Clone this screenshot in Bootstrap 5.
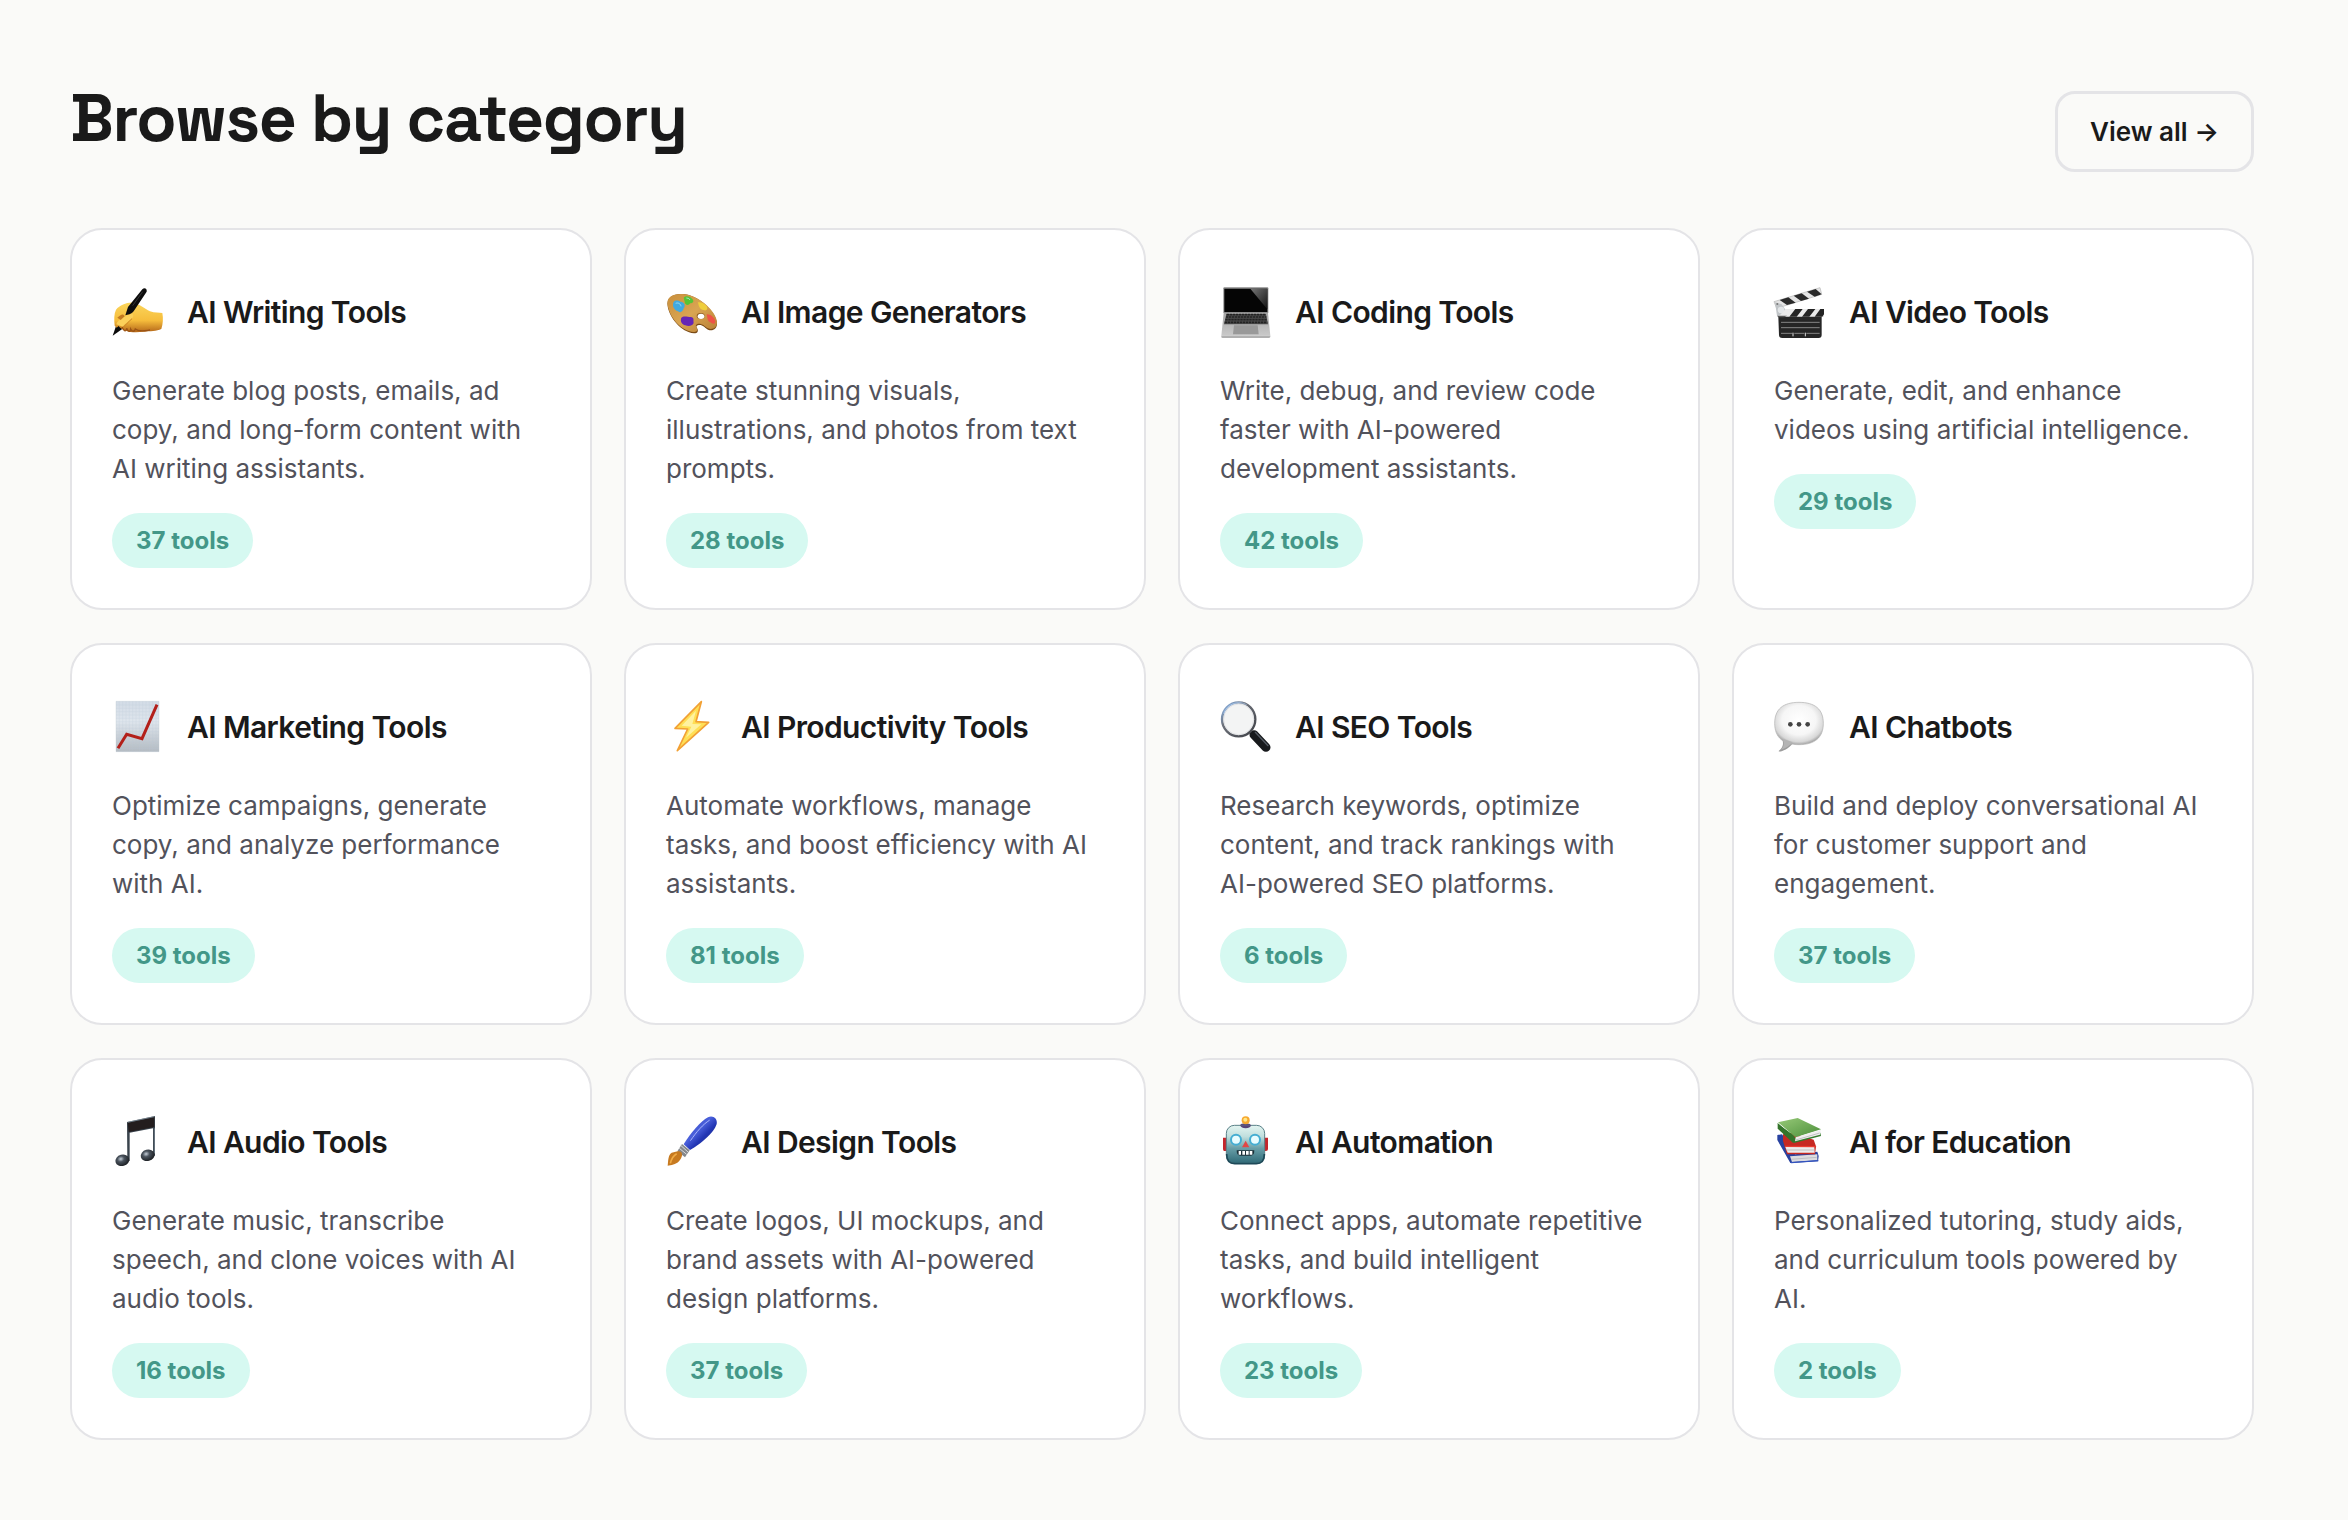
<!DOCTYPE html>
<html lang="en">
<head>
<meta charset="utf-8">
<meta name="viewport" content="width=device-width, initial-scale=1">
<title>Browse by category</title>
<link rel="stylesheet" href="https://cdn.jsdelivr.net/npm/bootstrap@5.3.0/dist/css/bootstrap.min.css">
<style>
  body { background: #fafaf8; color: #1a1a1a; font-family: Inter, "Liberation Sans", sans-serif; font-optical-sizing: none; }
  .browse { padding: 80px 94px 80px 70px; }
  .browse-head { margin-bottom: 56px; }
  .browse-title { font-family: "Space Grotesk", Inter, sans-serif; font-size: 66px; line-height: 76px; font-weight: 700; letter-spacing: -0.02em; margin-bottom: 16px; }
  .view-all { --bs-btn-color: #1a1a1a; --bs-btn-border-color: #e4e4e7; --bs-btn-hover-border-color: #c8c8cd; --bs-btn-font-size: 26px; --bs-btn-font-weight: 600; --bs-btn-line-height: 39px; --bs-btn-padding-x: 32px; --bs-btn-padding-y: 18px; --bs-btn-border-width: 3px; --bs-btn-border-radius: 20px; }
  .category-grid { --bs-gutter-x: 32px; --bs-gutter-y: 33px; }
  .category { --bs-card-border-color: #e4e4e7; --bs-card-border-width: 2px; --bs-card-border-radius: 32px; --bs-card-inner-border-radius: 30px; --bs-card-spacer-x: 40px; --bs-card-spacer-y: 40px; --bs-card-bg: #fff; color: #1a1a1a; }
  .category-head { height: 84px; gap: 24px; margin-bottom: 17px; }
  .category-head svg { width: 51px; height: 51px; flex: none; overflow: visible; }
  .category-name { font-size: 30px; line-height: 40px; font-weight: 600; letter-spacing: -0.02em; margin: 0; }
  .category-text { font-size: 26px; line-height: 39px; color: #52525b; margin-bottom: 25px; padding-right: 6px; }
  .tool-count { display: inline-block; background: #d6f9f1; color: #439788; font-size: 24px; line-height: 35px; font-weight: 700; padding: 10px 24px; vertical-align: top; }
</style>
<script src="https://cdn.jsdelivr.net/npm/bootstrap@5.3.0/dist/js/bootstrap.bundle.min.js" defer></script>
</head>
<body>
<svg width="0" height="0" class="position-absolute" aria-hidden="true">
  <defs>
    <linearGradient id="skin" x1="0" y1="0" x2="0" y2="1"><stop offset="0" stop-color="#fbd65c"/><stop offset=".6" stop-color="#f6bd3c"/><stop offset="1" stop-color="#b5681a"/></linearGradient>
    <linearGradient id="wood" x1="0" y1="0" x2="1" y2="1"><stop offset="0" stop-color="#c98f3c"/><stop offset=".5" stop-color="#d9a552"/><stop offset="1" stop-color="#b87f35"/></linearGradient>
    <linearGradient id="paper" x1="0" y1="0" x2="0" y2="1"><stop offset="0" stop-color="#d3dce6"/><stop offset=".4" stop-color="#dfe6ed"/><stop offset="1" stop-color="#b4bbc2"/></linearGradient>
    <linearGradient id="glare" x1="0" y1="0" x2="1" y2="1"><stop offset="0" stop-color="#777"/><stop offset="1" stop-color="#111"/></linearGradient>
    <linearGradient id="metal" x1="0" y1="0" x2="0" y2="1"><stop offset="0" stop-color="#a6a6a6"/><stop offset="1" stop-color="#c9c9c9"/></linearGradient>
    <radialGradient id="bubble" cx=".5" cy=".42" r=".58"><stop offset="0" stop-color="#fff"/><stop offset=".6" stop-color="#f6f6f6"/><stop offset=".88" stop-color="#d8d8d8"/><stop offset="1" stop-color="#a5a5a5"/></radialGradient>
    <linearGradient id="lens" x1="0" y1="0" x2="1" y2="1"><stop offset="0" stop-color="#8fbdf5"/><stop offset=".35" stop-color="#6d717a"/><stop offset="1" stop-color="#3d3f44"/></linearGradient>
    <linearGradient id="robo" x1="0" y1="0" x2="0" y2="1"><stop offset="0" stop-color="#e4f5f1"/><stop offset=".3" stop-color="#bfdedd"/><stop offset=".6" stop-color="#699fa8"/><stop offset="1" stop-color="#2f6a77"/></linearGradient>
    <radialGradient id="ball" cx=".42" cy=".35" r=".7"><stop offset="0" stop-color="#c5ced8"/><stop offset=".35" stop-color="#4a535d"/><stop offset="1" stop-color="#15181b"/></radialGradient>
    <linearGradient id="green" x1="0" y1="0" x2="1" y2="1"><stop offset="0" stop-color="#97c978"/><stop offset="1" stop-color="#4b8f3a"/></linearGradient>
    <linearGradient id="blue" x1="0" y1="0" x2="1" y2="1"><stop offset="0" stop-color="#2537a8"/><stop offset=".42" stop-color="#4a60dc"/><stop offset=".6" stop-color="#2236b4"/><stop offset="1" stop-color="#18226e"/></linearGradient>
  </defs>
</svg>

<main class="browse">
  <header class="browse-head d-flex flex-wrap justify-content-between align-items-end">
    <h2 class="browse-title">Browse by category</h2>
    <a class="btn view-all" href="#all">View all →</a>
  </header>

  <div class="row row-cols-1 row-cols-md-2 row-cols-xl-4 category-grid">
    <div class="col"><article class="card category h-100"><div class="card-body">
      <div class="category-head d-flex align-items-center">
        <svg viewBox="36 48 153 153" aria-hidden="true">
          <path d="M50 160 38 194 72 170Z" fill="#0b0b0b"/>
          <path d="M44 164C42 146 42 128 48 116C60 102 82 93 100 95C118 98 134 113 150 121C164 126 178 125 187 126C190 142 189 158 184 174C170 181 150 180 132 182C114 184 92 185 78 179C68 176 60 172 56 165L50 170Z" fill="url(#skin)"/>
          <path d="M49 160C54 146 72 138 88 130C98 124 104 133 96 142C86 152 76 158 68 167Z" fill="#fbd05a"/>
          <path d="M52 140C62 130 70 126 74 136L62 147Z" fill="#c37a20"/>
          <path d="M96 143C84 154 78 160 70 169" fill="none" stroke="#cc8527" stroke-width="3"/>
          <path d="M66 168C72 182 78 183 80 172C84 184 91 184 92 174C97 184 104 182 106 174C118 184 140 178 150 177" fill="none" stroke="#9b5415" stroke-width="4"/>
          <path d="M127 55Q134 48 140 56V62L103 118Q96 130 82 131L76 133 84 108Z" fill="#0d0d0d"/>
          <path d="M128 62 98 104" stroke="#4a4a4a" stroke-width="2"/>
        </svg>
        <h3 class="category-name">AI Writing Tools</h3>
      </div>
      <p class="category-text">Generate blog posts, emails, ad copy, and long-form content with AI writing assistants.</p>
      <span class="tool-count rounded-pill">37 tools</span>
    </div></article></div>

    <div class="col"><article class="card category h-100"><div class="card-body">
      <div class="category-head d-flex align-items-center">
        <svg viewBox="33 48 153 153" aria-hidden="true">
          <path d="M38 106C33 78 58 66 90 70C138 77 184 126 186 157C187 175 171 182 159 176C149 171 148 165 137 162C127 161 122 165 126 171C131 180 129 187 117 187C78 184 43 140 38 106Z" fill="#7b4b16"/>
          <path d="M38 102C33 76 58 66 90 70C138 77 184 124 186 153C187 170 171 178 159 172C149 167 148 162 137 159C125 157 120 163 124 169C129 177 127 184 116 183C78 180 43 138 38 102Z" fill="url(#wood)"/>
          <ellipse cx="137" cy="135" rx="12" ry="9" fill="#8b5a20"/><ellipse cx="138" cy="136" rx="10" ry="8" fill="#fff"/>
          <path d="M55 95C57 86 70 88 77 92C89 94 92 103 86 112C84 122 76 127 69 121C58 116 51 106 55 95Z" fill="#41a9e0"/>
          <path d="M86 80C92 73 106 75 111 83C119 90 114 97 105 97C101 106 88 101 89 92Z" fill="#56c436"/>
          <path d="M129 94C137 93 149 97 155 106C160 115 153 121 146 117C135 117 131 106 129 94Z" fill="#efce3c"/>
          <path d="M155 130C165 129 178 138 181 150C181 161 173 160 166 154C157 151 158 142 155 130Z" fill="#ee5347"/>
          <path d="M79 140C85 133 99 138 107 138C119 139 114 148 116 156C111 167 99 166 91 163C80 160 75 151 79 140Z" fill="#6526b5"/>
          <path d="M62 97C69 94 77 98 78 106M94 81Q103 81 105 87" stroke="#b5ecfb" stroke-width="3" fill="none" opacity=".7"/>
        </svg>
        <h3 class="category-name">AI Image Generators</h3>
      </div>
      <p class="category-text">Create stunning visuals, illustrations, and photos from text prompts.</p>
      <span class="tool-count rounded-pill">28 tools</span>
    </div></article></div>

    <div class="col"><article class="card category h-100"><div class="card-body">
      <div class="category-head d-flex align-items-center">
        <svg viewBox="30 48 153 153" aria-hidden="true">
          <path d="M43 49H172Q175 49 175 52V126H40V52Q40 49 43 49Z" fill="#8b8b8b"/>
          <path d="M43 53H172V123H43Z" fill="#050505"/>
          <path d="M121 53H172V115Z" fill="url(#glare)"/>
          <path d="M41 126H174L181 194H34Z" fill="url(#metal)"/>
          <path d="M49 129H168L174 160H42Z" fill="#4c4c4c"/>
          <path d="M50 131H168M48 138H169M46 146H170M44 154H172" stroke="#222" stroke-width="5" stroke-dasharray="7 2"/>
          <path d="M72 163H143L146 190H69Z" fill="#999"/>
          <path d="M34 194H181V198Q180 201 176 201H38Q34 201 34 198Z" fill="#b0b0b0"/>
        </svg>
        <h3 class="category-name">AI Coding Tools</h3>
      </div>
      <p class="category-text">Write, debug, and review code faster with AI-powered development assistants.</p>
      <span class="tool-count rounded-pill">42 tools</span>
    </div></article></div>

    <div class="col"><article class="card category h-100"><div class="card-body">
      <div class="category-head d-flex align-items-center">
        <svg viewBox="27 48 153 153" aria-hidden="true">
          <path d="M27 92 165 50 170 70 35 112Z" fill="#e4e4e4" stroke="#b4b4b4" stroke-width="2"/>
          <path d="M44 87 70 79 92 95 66 102ZM86 74 110 67 132 83 108 90ZM126 62 152 54 170 70 149 77Z" fill="#2a2a2a"/>
          <path d="M30 94 50 100 70 128 66 134H36Z" fill="#c1c5c8"/><circle cx="48" cy="117" r="10" fill="#e3e6e8"/>
          <circle cx="37" cy="99" r="3" fill="#777"/><circle cx="58" cy="129" r="3" fill="#777"/>
          <path d="M62 114H177V137H40Z" fill="#e9e9e9"/>
          <path d="M91 114H113L95 137H73ZM129 114H151L133 137H111ZM166 114H177V130L172 137H149Z" fill="#242424"/>
          <path d="M40 137H170V192Q170 201 161 201H52Q42 201 42 192Z" fill="#262626"/>
          <path d="M48 154H164M48 170H164M48 187H82M88 187H118M124 187H164" stroke="#858585" stroke-width="3"/>
          <path d="M84 185V196M121 185V196" stroke="#ddd" stroke-width="3"/>
          <path d="M36 134H66L58 139H40Z" fill="#555"/>
        </svg>
        <h3 class="category-name">AI Video Tools</h3>
      </div>
      <p class="category-text">Generate, edit, and enhance videos using artificial intelligence.</p>
      <span class="tool-count rounded-pill">29 tools</span>
    </div></article></div>

    <div class="col"><article class="card category h-100"><div class="card-body">
      <div class="category-head d-flex align-items-center">
        <svg viewBox="36 48 153 153" aria-hidden="true">
          <path d="M48 46H177V197H48Z" fill="url(#paper)" stroke="#bcc8d2" stroke-width="1"/>
          <path d="M58 46V197M68 46V197M78 46V197M88 46V197M98 46V197M108 46V197M118 46V197M128 46V197M138 46V197M148 46V197M158 46V197M168 46V197M48 57H177M48 67H177M48 77H177M48 87H177M48 97H177M48 107H177M48 117H177M48 127H177M48 137H177M48 147H177M48 157H177M48 167H177M48 177H177M48 187H177" stroke="#b8c8d7" stroke-width="1" opacity=".6"/>
          <path d="M54 187 80 145 126 158 171 56" fill="none" stroke="#b3201a" stroke-width="9"/>
        </svg>
        <h3 class="category-name">AI Marketing Tools</h3>
      </div>
      <p class="category-text">Optimize campaigns, generate copy, and analyze performance with AI.</p>
      <span class="tool-count rounded-pill">39 tools</span>
    </div></article></div>

    <div class="col"><article class="card category h-100"><div class="card-body">
      <div class="category-head d-flex align-items-center">
        <svg viewBox="36 48 153 153" aria-hidden="true">
          <path d="M142 47 63 127 101 129 70 194 164 109 126 107Z" fill="#ffdf55" stroke="#f2a135" stroke-width="5" stroke-linejoin="round"/>
          <path d="M126 74 83 119 112 122 96 155 142 115 115 114Z" fill="#fff2a0"/>
        </svg>
        <h3 class="category-name">AI Productivity Tools</h3>
      </div>
      <p class="category-text">Automate workflows, manage tasks, and boost efficiency with AI assistants.</p>
      <span class="tool-count rounded-pill">81 tools</span>
    </div></article></div>

    <div class="col"><article class="card category h-100"><div class="card-body">
      <div class="category-head d-flex align-items-center">
        <svg viewBox="36 48 153 153" aria-hidden="true">
          <path d="M124 138 137 151" stroke="#777" stroke-width="7"/>
          <path d="M138 146 174 184" stroke="#17191c" stroke-width="27" stroke-linecap="round"/>
          <path d="M142 139 180 179" stroke="#555b64" stroke-width="4" stroke-linecap="round"/>
          <ellipse cx="92" cy="100" rx="50" ry="51" fill="#f3f4f4" stroke="url(#lens)" stroke-width="7"/>
          <ellipse cx="92" cy="100" rx="45" ry="46" fill="none" stroke="#d8dadd" stroke-width="2"/>
          <path d="M47 83C57 53 91 42 116 56" fill="none" stroke="#b4d7ff" stroke-width="2"/>
        </svg>
        <h3 class="category-name">AI SEO Tools</h3>
      </div>
      <p class="category-text">Research keywords, optimize content, and track rankings with AI-powered SEO platforms.</p>
      <span class="tool-count rounded-pill">6 tools</span>
    </div></article></div>

    <div class="col"><article class="card category h-100"><div class="card-body">
      <div class="category-head d-flex align-items-center">
        <svg viewBox="36 48 153 153" aria-hidden="true">
          <path d="M60 158C68 177 59 187 50 195C50 200 78 193 93 171Z" fill="#9c9c9c"/>
          <path d="M111 49C158 49 184 69 184 112C184 155 158 176 111 176C64 176 38 155 38 112C38 69 64 49 111 49Z" fill="url(#bubble)" stroke="#b0b0b0" stroke-width="2"/>
          <path d="M62 158C70 176 62 185 57 191C70 189 82 179 92 169Z" fill="#b4b4b4"/>
          <circle cx="85" cy="115" r="7" fill="#444"/><circle cx="111" cy="115" r="7" fill="#444"/><circle cx="137" cy="115" r="7" fill="#444"/>
        </svg>
        <h3 class="category-name">AI Chatbots</h3>
      </div>
      <p class="category-text">Build and deploy conversational AI for customer support and engagement.</p>
      <span class="tool-count rounded-pill">37 tools</span>
    </div></article></div>

    <div class="col"><article class="card category h-100"><div class="card-body">
      <div class="category-head d-flex align-items-center">
        <svg viewBox="36 48 153 153" aria-hidden="true">
          <path d="M81 63 165 45V164H159V82L89 95V180H82Z" fill="#39434c"/>
          <path d="M83 65 163 48V78L86 93Z" fill="#231d1e"/>
          <path d="M83 64 163 47M163 82V158" stroke="#8795a1" stroke-width="2"/>
          <ellipse cx="67" cy="178" rx="21" ry="17" transform="rotate(-15 67 178)" fill="url(#ball)"/>
          <ellipse cx="143" cy="163" rx="21" ry="17" transform="rotate(-15 143 163)" fill="url(#ball)"/>
        </svg>
        <h3 class="category-name">AI Audio Tools</h3>
      </div>
      <p class="category-text">Generate music, transcribe speech, and clone voices with AI audio tools.</p>
      <span class="tool-count rounded-pill">16 tools</span>
    </div></article></div>

    <div class="col"><article class="card category h-100"><div class="card-body">
      <div class="category-head d-flex align-items-center">
        <svg viewBox="36 48 153 153" aria-hidden="true">
          <path d="M89 130C110 96 140 61 162 49C177 42 191 53 188 69C181 94 141 129 108 147Z" fill="url(#blue)"/>
          <path d="M110 118C128 92 147 70 166 58" stroke="#a9b5fa" stroke-width="3" stroke-linecap="round" fill="none"/>
          <path d="M84 129 107 148 93 169 70 151Z" fill="#85888c"/>
          <path d="M80 133 102 153M76 142 98 160" stroke="#d8dadd" stroke-width="3"/>
          <path d="M71 151C91 150 85 170 75 181C65 191 51 193 41 194C43 180 42 161 53 155Z" fill="#c77a20"/>
          <path d="M68 158C57 164 52 175 49 187" stroke="#f0ab45" stroke-width="5" fill="none"/>
        </svg>
        <h3 class="category-name">AI Design Tools</h3>
      </div>
      <p class="category-text">Create logos, UI mockups, and brand assets with AI-powered design platforms.</p>
      <span class="tool-count rounded-pill">37 tools</span>
    </div></article></div>

    <div class="col"><article class="card category h-100"><div class="card-body">
      <div class="category-head d-flex align-items-center">
        <svg viewBox="36 48 153 153" aria-hidden="true">
          <path d="M45 110H58V150H49Q45 150 45 144ZM167 110H180V144Q180 150 174 150H167Z" fill="#c5252b"/>
          <path d="M97 72Q98 67 112 67Q127 67 128 72V80H97Z" fill="#594477"/>
          <circle cx="113" cy="58" r="12" fill="#f7a92f"/><circle cx="112" cy="56" r="6" fill="#ffe78a"/>
          <rect x="55" y="73" width="115" height="114" rx="24" fill="url(#robo)" stroke="#5a8188" stroke-width="3"/>
          <path d="M56 159Q56 188 80 188H145Q169 188 169 159" stroke="#1d4958" stroke-width="5" fill="none"/>
          <path d="M96 73H130Q126 82 113 82Q100 82 96 73Z" fill="#594477"/>
          <circle cx="84" cy="116" r="15" fill="#e8fcff" stroke="#45add2" stroke-width="6"/><circle cx="141" cy="116" r="15" fill="#e8fcff" stroke="#45add2" stroke-width="6"/>
          <path d="M113 119 124 139H102Z" fill="#e24645"/>
          <path d="M86 148H139Q139 164 128 164H97Q86 164 86 148Z" fill="#1b3038"/>
          <path d="M92 150H99V161H92ZM103 150H111V161H103ZM114 150H122V161H114ZM125 150H133V161H125Z" fill="#fff"/>
        </svg>
        <h3 class="category-name">AI Automation</h3>
      </div>
      <p class="category-text">Connect apps, automate repetitive tasks, and build intelligent workflows.</p>
      <span class="tool-count rounded-pill">23 tools</span>
    </div></article></div>

    <div class="col"><article class="card category h-100"><div class="card-body">
      <div class="category-head d-flex align-items-center">
        <svg viewBox="36 48 153 153" aria-hidden="true">
          <path d="M46 102 60 100 99 160 166 152 170 165 168 181 85 186 46 117Z" fill="#2842a0"/>
          <path d="M84 166 166 160 166 178 90 183Z" fill="#dcdce0"/><path d="M87 175 164 169" stroke="#aeb0b5" stroke-width="2"/>
          <path d="M87 185 169 179" stroke="#3253bf" stroke-width="4"/>
          <path d="M63 100 88 95 155 116 162 136 159 160H75L63 120Z" fill="#c62922"/>
          <path d="M70 138H157L158 155H77Z" fill="#ececec"/><path d="M73 147H157" stroke="#aaa" stroke-width="2"/>
          <path d="M69 136 161 137" stroke="#eb3d31" stroke-width="4"/>
          <path d="M45 67 96 126 177 105 175 95 99 111 94 102Z" fill="#347a2d"/>
          <path d="M48 64 107 51 177 85 101 109Z" fill="url(#green)"/>
          <path d="M101 109 176 87 174 101 99 121Z" fill="#efefef"/><path d="M101 117 173 96" stroke="#aaa" stroke-width="2"/>
          <path d="M47 66V83L94 127 99 112Z" fill="#34742b"/>
        </svg>
        <h3 class="category-name">AI for Education</h3>
      </div>
      <p class="category-text">Personalized tutoring, study aids, and curriculum tools powered by AI.</p>
      <span class="tool-count rounded-pill">2 tools</span>
    </div></article></div>
  </div>
</main>
</body>
</html>
